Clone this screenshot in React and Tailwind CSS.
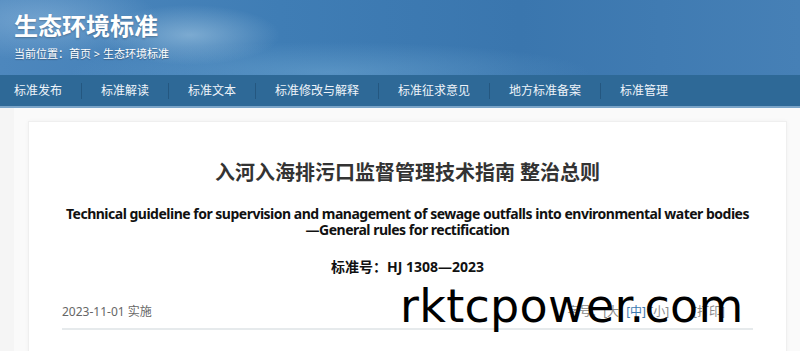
import React from "react";

const navItems = [
  "标准发布",
  "标准解读",
  "标准文本",
  "标准修改与解释",
  "标准征求意见",
  "地方标准备案",
  "标准管理",
];

export default function App() {
  return (
    <div className="relative w-[800px] h-[351px] overflow-hidden bg-[#f5f5f5] font-['Noto_Sans','Noto_Sans_CJK_SC',sans-serif]">
      {/* banner */}
      <div className="h-[75px] px-[14px] pt-[11px] bg-[radial-gradient(ellipse_90px_30px_at_190px_35px,rgba(170,205,230,0.55),transparent),radial-gradient(ellipse_120px_40px_at_40px_20px,rgba(150,190,225,0.5),transparent),radial-gradient(ellipse_260px_30px_at_330px_72px,rgba(120,175,215,0.45),transparent),linear-gradient(90deg,#4d87bd_0%,#3f7db5_35%,#3a76ae_65%,#4680b6_100%)]">
        <h1 className="text-white text-[24px] leading-[30px] font-bold [text-shadow:0_1px_2px_rgba(0,0,0,0.25)]">
          生态环境标准
        </h1>
        <p className="mt-[6px] text-white text-[11px] leading-[14px] [text-shadow:0_1px_1px_rgba(0,0,0,0.3)]">
          当前位置：首页 &gt; 生态环境标准
        </p>
      </div>

      {/* nav */}
      <div className="flex items-center h-[33px] bg-[#2e6997] border-b-2 border-[#7aa4c8] pl-[14px] pt-[1px]">
        {navItems.map((item, i) => (
          <React.Fragment key={item}>
            {i > 0 && <span className="w-px h-[16px] bg-[#245780]" />}
            <span
              className={`text-[12px] text-[#eef4fa] ${i === 0 ? "pr-[19px]" : "px-[19px]"}`}
            >
              {item}
            </span>
          </React.Fragment>
        ))}
      </div>

      {/* content */}
      <div className="flex pl-[14px] h-full">
        <div className="flex-1 bg-[#fafafa] pl-[14px] pr-[13px] pt-[13px]">
          <div className="bg-white border border-[#efefef] shadow-[0_0_4px_rgba(0,0,0,0.04)] px-[33px] pt-[38px] h-[300px]">
            <h2 className="text-center text-[20px] leading-[26px] font-bold text-[#333]">
              入河入海排污口监督管理技术指南 整治总则
            </h2>
            <p className="mt-[20px] text-center text-[14px] leading-[16px] font-bold text-[#111] tracking-[-0.5px] whitespace-nowrap">
              Technical guideline for supervision and management of sewage outfalls into environmental water bodies
              <br />
              —General rules for rectification
            </p>
            <p className="mt-[19px] text-center text-[14px] leading-[20px] font-bold text-[#111]">
              标准号：HJ 1308—2023
            </p>
            <div className="mt-[25px] pb-[6px] border-b-2 border-[#e6eaec] flex items-center justify-between text-[12px] leading-[20px]">
              <span className="text-[#666]">2023-11-01 实施</span>
              <span className="text-[#888] pr-[28px]">
                字号：[大] <span className="text-[#3b78b0]">[中]</span> [小]
                <span className="ml-[24px]">[打印]</span>
              </span>
            </div>
          </div>
        </div>
      </div>

      {/* watermark */}
      <div className="absolute left-[400px] top-[278px] text-[46px] leading-[56px] tracking-[0.3px] text-black font-['DejaVu_Sans',sans-serif]">
        rktcpower.com
      </div>
    </div>
  );
}
